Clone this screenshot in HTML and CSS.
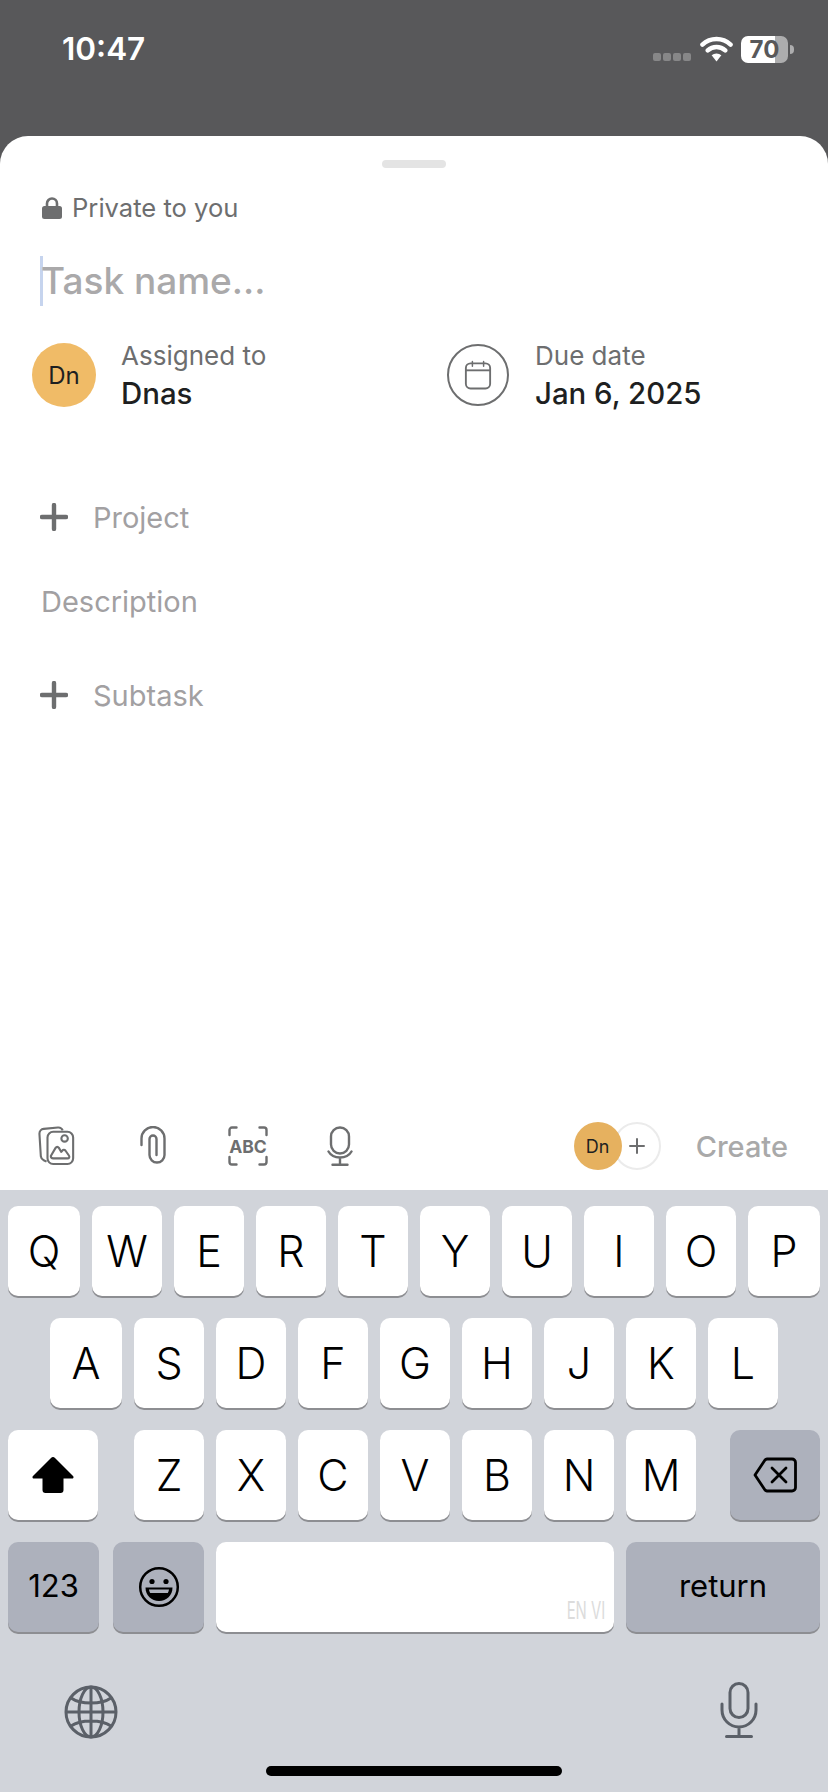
FILE: index.html
```html
<!DOCTYPE html>
<html lang="en">
<head>
<meta charset="utf-8">
<title>New task</title>
<link rel="stylesheet" href="styles.css">
</head>
<body>
<div class="app">
  <header class="status">
    <span class="time">10:47</span>
    <div class="status-right">
      <div class="signal"><i></i><i></i><i></i><i></i></div>
      <svg class="wifi" viewBox="0 0 34 28"><path d="M2.5 9.5a21 21 0 0 1 29 0M8 15.5a13 13 0 0 1 18 0" fill="none" stroke="#fff" stroke-width="4.6" stroke-linecap="round"/><path d="M12 20.5a7.5 7.5 0 0 1 10 0L17 27z" fill="#fff"/></svg>
      <div class="battery"><div class="battery-body"><span>70</span></div><div class="battery-nub"></div></div>
    </div>
  </header>

  <main class="sheet">
    <div class="handle"></div>
    <div class="private">
      <svg class="lock" viewBox="0 0 20 22"><path d="M5 10V6.5a5 5 0 0 1 10 0V10" fill="none" stroke="#6d6e6f" stroke-width="2.6"/><rect x="0" y="9" width="20" height="13" rx="2.5" fill="#6d6e6f"/></svg>
      <span>Private to you</span>
    </div>
    <div class="title-row"><span class="caret"></span><span class="title">Task name...</span></div>
    <div class="meta">
      <div class="meta-item">
        <div class="avatar">Dn</div>
        <div class="meta-text"><span class="meta-label">Assigned to</span><span class="meta-value">Dnas</span></div>
      </div>
      <div class="meta-item meta-due">
        <div class="cal-circle">
          <svg class="cal" viewBox="0 0 30 32"><path d="M9 1.5v5M21 1.5v5" stroke="#6d6e6f" stroke-width="1.6" stroke-linecap="round"/><rect x="2" y="3.5" width="26" height="27" rx="5" fill="none" stroke="#6d6e6f" stroke-width="2"/><path d="M2 11h26" stroke="#6d6e6f" stroke-width="2"/></svg>
        </div>
        <div class="meta-text"><span class="meta-label">Due date</span><span class="meta-value">Jan 6, 2025</span></div>
      </div>
    </div>
    <div class="add-row add-project">
      <svg class="plus" viewBox="0 0 28 28"><path d="M14 2v24M2 14h24" stroke="#6d6e6f" stroke-width="4.4" stroke-linecap="round"/></svg>
      <span>Project</span>
    </div>
    <div class="description">Description</div>
    <div class="add-row add-subtask">
      <svg class="plus" viewBox="0 0 28 28"><path d="M14 2v24M2 14h24" stroke="#6d6e6f" stroke-width="4.4" stroke-linecap="round"/></svg>
      <span>Subtask</span>
    </div>

    <div class="toolbar">
      <div class="tools">
        <svg class="tool tool-photos" viewBox="0 0 40 42" fill="none" stroke="#6d6e6f" stroke-width="2.2" stroke-linejoin="round"><path d="M9 37.5 6 36a5 5 0 0 1-3-4L1.500 8A5 5 0 0 1 6 3l15-1.500a5 5 0 0 1 5 3"/><rect x="10" y="6" width="27" height="34" rx="6" fill="#fff"/><circle cx="28" cy="13" r="3.400"/><path d="M13.500 31.500c0 2 1 2.500 2.500 2.500h15c2 0 2.500-1.500 1.500-3l-3.500-5c-1-1.300-2.500-1.300-3.500 0l-1 1.300-2.500-4.300c-1-1.500-2.500-1.500-3.500 0z"/></svg>
        <svg class="tool tool-clip" viewBox="0 0 26 40" fill="none" stroke="#6d6e6f" stroke-width="2.4" stroke-linecap="round"><path d="M1.500 19V12.500a11.500 11.500 0 0 1 23 0V29a7.500 7.500 0 0 1-15 0V13a3.500 3.500 0 0 1 7 0V29"/></svg>
        <div class="tool tool-abc">
          <svg class="abc-frame" viewBox="0 0 40 40" fill="none" stroke="#6d6e6f" stroke-width="2.4" stroke-linecap="round"><path d="M1.500 9V4a2.500 2.500 0 0 1 2.500-2.500h4.500M31.500 1.500H36A2.500 2.500 0 0 1 38.500 4v5M38.500 31v5a2.500 2.500 0 0 1-2.500 2.500h-4.500M8.500 38.500H4A2.500 2.500 0 0 1 1.500 36v-5"/></svg>
          <span>ABC</span>
        </div>
        <svg class="tool tool-mic" viewBox="0 0 26 40" fill="none" stroke="#6d6e6f" stroke-width="2.400" stroke-linecap="round"><rect x="4" y="1.500" width="18" height="26" rx="9"/><path d="M1.500 25.500c2 3.500 6 6 11.500 6s9.500-2.500 11.500-6M13 31.500v7M5.500 38.700h15"/></svg>
      </div>
      <div class="actions">
        <div class="assignees">
          <div class="avatar avatar-small">Dn</div>
          <div class="add-assignee"><svg viewBox="0 0 18 18"><path d="M9 2v14M2 9h14" stroke="#6d6e6f" stroke-width="2" stroke-linecap="round"/></svg></div>
        </div>
        <span class="create">Create</span>
      </div>
    </div>
  </main>

  <section class="keyboard">
    <div class="kb-row">
      <div class="key key-wide">Q</div><div class="key">W</div><div class="key">E</div><div class="key">R</div><div class="key">T</div><div class="key">Y</div><div class="key">U</div><div class="key">I</div><div class="key">O</div><div class="key key-wide">P</div>
    </div>
    <div class="kb-row kb-row-home">
      <div class="key key-wide">A</div><div class="key">S</div><div class="key">D</div><div class="key">F</div><div class="key">G</div><div class="key">H</div><div class="key">J</div><div class="key">K</div><div class="key">L</div>
    </div>
    <div class="kb-row">
      <div class="key key-shift"><svg class="shift" viewBox="0 0 42 36"><path d="M19 1 1 19c-1 1-.5 2.500 1 2.500h8.500V33a3 3 0 0 0 3 3h15a3 3 0 0 0 3-3V21.500H40c1.500 0 2-1.500 1-2.500L23 1c-1.200-1.200-2.800-1.200-4 0z" fill="#000"/></svg></div>
      <div class="key">Z</div><div class="key">X</div><div class="key">C</div><div class="key">V</div><div class="key">B</div><div class="key">N</div><div class="key">M</div>
      <div class="key key-delete"><svg class="delete" viewBox="0 0 44 36" fill="none" stroke="#000" stroke-width="2.800" stroke-linecap="round" stroke-linejoin="round"><path d="M14 2h25a3.500 3.500 0 0 1 3.500 3.500v25A3.500 3.500 0 0 1 39 34H14a3 3 0 0 1-2-1L2 18 12 3a3 3 0 0 1 2-1z"/><path d="M19 11l14 14M33 11 19 25"/></svg></div>
    </div>
    <div class="kb-row">
      <div class="key key-fn key-num">123</div>
      <div class="key key-fn key-emoji"><svg class="emoji" viewBox="0 0 42 42"><circle cx="21" cy="21" r="18.800" fill="none" stroke="#000" stroke-width="2.500"/><circle cx="14" cy="15.500" r="2.600"/><circle cx="28" cy="15.500" r="2.600"/><path d="M7.500 21.500h27c0 8-6 13.500-13.500 13.500S7.500 29.500 7.500 21.500z"/><path d="M11 23.500h20c-.3 1.500-.7 2.500-1.200 3.500H12.200c-.5-1-1-2-1.200-3.500z" fill="#aeb2bd"/></svg></div>
      <div class="key key-space"><span class="lang">EN VI</span></div>
      <div class="key key-fn key-return">return</div>
    </div>
    <div class="kb-bottom">
      <svg class="globe" viewBox="0 0 54 54" fill="none" stroke="#5b6068" stroke-width="3"><circle cx="27" cy="27" r="25"/><ellipse cx="27" cy="27" rx="12" ry="25"/><path d="M27 2v50M2 27h50M7 13c5 3.500 12 5 20 5s15-1.500 20-5M7 41c5-3.500 12-5 20-5s15 1.500 20 5"/></svg>
      <svg class="kb-mic" viewBox="0 0 38 56" fill="none" stroke="#5b6068" stroke-width="3" stroke-linecap="round"><rect x="10" y="1.500" width="18" height="34" rx="9"/><path d="M2 22v6a17 17 0 0 0 34 0v-6M19 45v9M6.500 54.500h25"/></svg>
    </div>
    <div class="home-bar"></div>
  </section>
</div>
</body>
</html>
```

FILE: styles.css
```css
* { box-sizing: border-box; }
html, body { margin: 0; padding: 0; }
body { font-family: Inter, "Liberation Sans", sans-serif; background: #58585a; }

.app { width: 828px; height: 1792px; display: flex; flex-direction: column; overflow: hidden; background: #58585a; }

.status { height: 136px; flex: none; display: flex; justify-content: space-between; align-items: flex-start; padding: 30px 34px 0 62px; color: #fff; }
.time { font-size: 31.5px; line-height: 38px; font-weight: 600; }
.status-right { display: flex; align-items: flex-start; }
.signal { display: flex; gap: 2px; margin-top: 23px; margin-right: 9px; }
.signal i { width: 8px; height: 8px; border-radius: 2px; background: #878788; }
.wifi { width: 33px; height: 28px; margin-top: 5px; margin-right: 8px; }
.battery { display: flex; align-items: center; margin-top: 6px; }
.battery-body { width: 47px; height: 27px; border-radius: 7px; background: linear-gradient(90deg, #fff 0, #fff 34px, #adadae 34px); display: flex; align-items: center; justify-content: center; }
.battery-body span { font-size: 24px; font-weight: 700; color: #58585a; line-height: 27px; }
.battery-nub { width: 4px; height: 9px; margin-left: 2px; background: #adadae; border-radius: 0 4px 4px 0; }

.sheet { flex: 1; background: #fff; border-radius: 28px 28px 0 0; display: flex; flex-direction: column; }
.handle { width: 64px; height: 8px; border-radius: 4px; background: #e4e4e4; margin: 24px auto 0; flex: none; }

.private { height: 30px; margin-top: 24px; margin-bottom: 1px; padding-left: 42px; display: flex; align-items: center; gap: 10px; color: #6d6e6f; font-size: 25.6px; }
.lock { width: 20px; height: 22px; margin-top: 2px; }

.title-row { height: 50px; margin-top: 33px; padding-left: 40px; display: flex; align-items: center; }
.caret { width: 3px; height: 50px; background: #c6d4ee; flex: none; }
.title { font-size: 37px; line-height: 52px; color: #aaa9aa; font-weight: 500; margin-left: -2px; }

.meta { display: flex; margin-top: 37px; padding-left: 32px; height: 64px; }
.meta-item { display: flex; align-items: center; flex: 0 0 415px; gap: 25px; }
.meta-due { gap: 26px; }
.avatar { width: 64px; height: 64px; border-radius: 50%; background: #f0bb67; color: #1e1f21; font-size: 24px; display: flex; align-items: center; justify-content: center; flex: none; }
.cal-circle { width: 62px; height: 62px; border-radius: 50%; border: 2px solid #6d6e6f; display: flex; align-items: center; justify-content: center; flex: none; }
.cal { width: 28px; height: 30px; }
.meta-text { display: flex; flex-direction: column; }
.meta-label { font-size: 26px; line-height: 38px; color: #6d6e6f; }
.meta-value { font-size: 29.4px; line-height: 38px; font-weight: 450; color: #1e1f21; }

.add-row { height: 40px; display: flex; align-items: center; padding-left: 40px; gap: 25px; color: #a2a0a2; font-size: 29px; }
.plus { width: 28px; height: 28px; flex: none; }
.add-project { margin-top: 90px; }
.add-subtask { margin-top: 54px; }
.description { height: 40px; line-height: 42px; margin-top: 44px; padding-left: 41px; color: #a2a0a2; font-size: 29px; }

.toolbar { margin-top: auto; height: 68px; display: flex; justify-content: space-between; padding-right: 40px; flex: none; }
.tools { display: flex; align-items: flex-start; padding-left: 38px; padding-top: 4px; }
.tool { height: 40px; flex: none; }
.tool-photos { width: 38px; }
.tool-clip { width: 26px; margin-left: 64px; }
.tool-abc { width: 40px; margin-left: 62px; display: flex; align-items: center; justify-content: center; position: relative; font-size: 17.5px; font-weight: 700; color: #6d6e6f; }
.abc-frame { position: absolute; inset: 0; width: 40px; height: 40px; }
.tool-mic { width: 26px; margin-left: 59px; }
.actions { display: flex; align-items: flex-start; }
.assignees { display: flex; }
.avatar-small { width: 48px; height: 48px; font-size: 18px; background: #e6b15f; position: relative; z-index: 1; }
.add-assignee { width: 48px; height: 48px; border-radius: 50%; border: 2px solid #ebebeb; margin-left: -9px; display: flex; align-items: center; justify-content: center; }
.add-assignee svg { width: 18px; height: 18px; }
.create { font-size: 29px; line-height: 50px; color: #a9a9a9; font-weight: 500; margin-left: 35px; }

.keyboard { height: 602px; flex: none; background: #d1d4da; padding-top: 16px; display: flex; flex-direction: column; gap: 22px; }
.kb-row { display: flex; gap: 12px; padding: 0 8px; height: 90px; flex: none; }
.kb-row-home { padding-left: 50px; }
.key { width: 70px; height: 90px; flex: none; border-radius: 10px; background: #fff; box-shadow: 0 2px 0 #8d8e92; display: flex; align-items: center; justify-content: center; font-family: Inter, "Liberation Sans", Arial, sans-serif; font-weight: 350; font-size: 43px; color: #000; }
.key-wide { width: 72px; }
.key-shift, .key-delete { width: 90px; }
.key-shift { margin-right: 24px; }
.key-delete { margin-left: 22px; background: #adb1bc; }
.shift { width: 42px; height: 36px; }
.delete { width: 44px; height: 36px; }
.key-fn { background: #adb1bc; font-size: 31px; font-weight: 400; line-height: 34px; padding-bottom: 2px; }
.key-num { width: 91px; margin-right: 2px; }
.key-emoji { width: 91px; padding-bottom: 0; }
.emoji { width: 42px; height: 42px; }
.key-space { width: 398px; position: relative; }
.key-return { width: 194px; }
.lang { position: absolute; right: 9px; bottom: 7px; font-size: 24px; line-height: 28px; color: #dcdcdc; transform: scaleX(.62); transform-origin: right bottom; white-space: nowrap; font-weight: 400; }

.kb-bottom { display: flex; justify-content: space-between; align-items: center; height: 60px; margin-top: 28px; padding: 0 70px 0 64px; flex: none; }
.globe { width: 54px; height: 54px; }
.kb-mic { width: 38px; height: 56px; margin-bottom: 4px; }
.home-bar { width: 296px; height: 10px; border-radius: 5px; background: #000; margin: 2px auto 0; flex: none; }
```
